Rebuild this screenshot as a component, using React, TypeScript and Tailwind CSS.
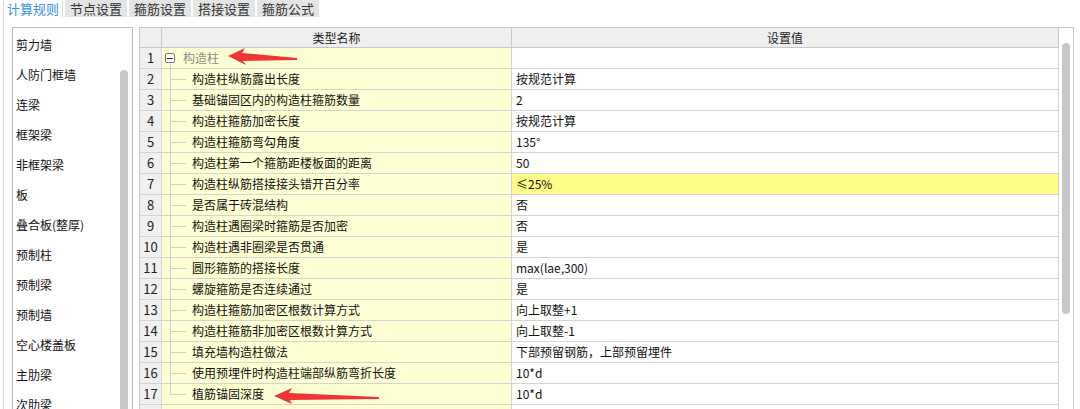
import React from 'react';

const menuItems = [
  '剪力墙',
  '人防门框墙',
  '连梁',
  '框架梁',
  '非框架梁',
  '板',
  '叠合板(整厚)',
  '预制柱',
  '预制梁',
  '预制墙',
  '空心楼盖板',
  '主肋梁',
  '次肋梁',
];

const tabs = ['计算规则', '节点设置', '箍筋设置', '搭接设置', '箍筋公式'];

interface Rule {
  name: string;
  value: string;
  highlight?: boolean;
}

const rules: Rule[] = [
  { name: '构造柱纵筋露出长度', value: '按规范计算' },
  { name: '基础锚固区内的构造柱箍筋数量', value: '2' },
  { name: '构造柱箍筋加密长度', value: '按规范计算' },
  { name: '构造柱箍筋弯勾角度', value: '135°' },
  { name: '构造柱第一个箍筋距楼板面的距离', value: '50' },
  { name: '构造柱纵筋搭接接头错开百分率', value: '≤25%', highlight: true },
  { name: '是否属于砖混结构', value: '否' },
  { name: '构造柱遇圈梁时箍筋是否加密', value: '否' },
  { name: '构造柱遇非圈梁是否贯通', value: '是' },
  { name: '圆形箍筋的搭接长度', value: 'max(lae,300)' },
  { name: '螺旋箍筋是否连续通过', value: '是' },
  { name: '构造柱箍筋加密区根数计算方式', value: '向上取整+1' },
  { name: '构造柱箍筋非加密区根数计算方式', value: '向上取整-1' },
  { name: '填充墙构造柱做法', value: '下部预留钢筋，上部预留埋件' },
  { name: '使用预埋件时构造柱端部纵筋弯折长度', value: '10*d' },
  { name: '植筋锚固深度', value: '10*d' },
];

const font = { fontFamily: '"Noto Sans CJK SC", "Microsoft YaHei", "Noto Sans", sans-serif' };

const rowCls = 'grid grid-cols-[22px_350px_547px] h-[21px] shrink-0';
const numCls = 'bg-[#f0f0f0] border-r border-b border-[#d4d4d4] flex items-center justify-center text-[13px] text-[#222]';

const App: React.FC = () => {
  return (
    <div className="relative w-[1080px] h-[409px] overflow-hidden bg-white text-[12px] text-[#111]" style={font}>
      {/* tabs */}
      <div className="flex h-[18px] items-stretch">
        {tabs.map((tab, i) =>
          i === 0 ? (
            <div
              key={tab}
              className="ml-[3px] w-[60px] border-l border-r border-[#dcdcdc] bg-white text-[#3a8ee6] flex items-center justify-center text-[13px]"
            >
              {tab}
            </div>
          ) : (
            <div
              key={tab}
              className="ml-[2px] w-[62px] h-[17px] bg-[#e4e4e4] text-[#333] flex items-center justify-center text-[13px]"
            >
              {tab}
            </div>
          )
        )}
      </div>

      {/* body */}
      <div className="ml-[3px] border-l border-[#dcdcdc] h-[391px] flex pt-[9px] pl-[8px]">
        {/* left list */}
        <div className="w-[121px] border border-b-0 border-[#bdbdbd] flex shrink-0">
          <div className="flex-1 pt-[2px] pl-[3px]">
            {menuItems.map((item) => (
              <div key={item} className="h-[30px] leading-[30px] text-[12px] whitespace-nowrap">
                {item}
              </div>
            ))}
          </div>
          <div className="w-[12px] pt-[42px] pr-[4px]">
            <div className="w-[8px] h-full bg-[#c8c8c8] rounded-t-[4px]" />
          </div>
        </div>

        {/* table */}
        <div className="ml-[6px] flex border-t border-l border-r border-[#c8c8c8] h-[382px] overflow-hidden">
          <div className="w-[919px] flex flex-col">
            {/* header */}
            <div className="grid grid-cols-[22px_350px_547px] h-[20px] shrink-0 bg-[#efefef]">
              <div className="border-r border-b border-[#c8c8c8]" />
              <div className="border-r border-b border-[#c8c8c8] flex items-center justify-center text-[#222]">类型名称</div>
              <div className="border-r border-b border-[#c8c8c8] flex items-center justify-center text-[#222]">设置值</div>
            </div>

            {/* group row */}
            <div className={rowCls}>
              <div className={numCls}>1</div>
              <div className="bg-[#ffffd4] border-r border-b border-[#d4d4d4] flex items-center">
                <div className="relative w-[20px] h-full shrink-0">
                  <div className="absolute left-[3px] top-[5px] w-[10px] h-[10px] border border-[#7a7a7a] rounded-[2px] bg-white flex items-center justify-center">
                    <div className="w-[6px] h-px bg-[#333]" />
                  </div>
                  <div className="absolute left-[8px] top-[15px] bottom-[-1px] w-px bg-[#cfcfcf]" />
                </div>
                <span className="ml-[1px] text-[#8a8a8a]">构造柱</span>
              </div>
              <div className="bg-white border-r border-b border-[#d4d4d4]" />
            </div>

            {rules.map((r, i) => {
              const last = i === rules.length - 1;
              return (
                <div key={r.name} className={rowCls}>
                  <div className={numCls}>{i + 2}</div>
                  <div className="bg-[#ffffd4] border-r border-b border-[#d4d4d4] flex items-center">
                    <div className="relative w-[30px] h-full shrink-0">
                      <div className={`absolute left-[8px] top-0 w-px bg-[#cfcfcf] ${last ? 'h-[10px]' : 'bottom-[-1px]'}`} />
                      <div className="absolute left-[8px] top-[10px] w-[16px] h-px bg-[#cfcfcf]" />
                    </div>
                    <span className="whitespace-nowrap">{r.name}</span>
                  </div>
                  <div
                    className={`border-r border-b border-[#d4d4d4] flex items-center pl-[4px] whitespace-nowrap ${
                      r.highlight ? 'bg-[#fdfd85]' : 'bg-white'
                    }`}
                  >
                    {r.value}
                  </div>
                </div>
              );
            })}

            <div className={rowCls}>
              <div className={numCls} />
              <div className="bg-[#ffffd4] border-r border-b border-[#d4d4d4]" />
              <div className="bg-white border-r border-b border-[#d4d4d4]" />
            </div>
          </div>

          {/* scrollbar */}
          <div className="w-[14px] pt-[15px] pl-[3px] pr-[3px]">
            <div className="w-[8px] h-[271px] bg-[#c8c8c8] rounded-[4px]" />
          </div>
        </div>
      </div>

      {/* annotation arrows */}
      <svg className="absolute inset-0 pointer-events-none" width="1080" height="409" viewBox="0 0 1080 409">
        <polygon points="228,56 245,48 242,53 297,58 297,60 243,61 246,65" fill="#ee3434" />
        <polygon points="274,396 292,388 289,393 379,397 379,399 290,400 292,404" fill="#ee3434" />
      </svg>
    </div>
  );
};

export default App;
